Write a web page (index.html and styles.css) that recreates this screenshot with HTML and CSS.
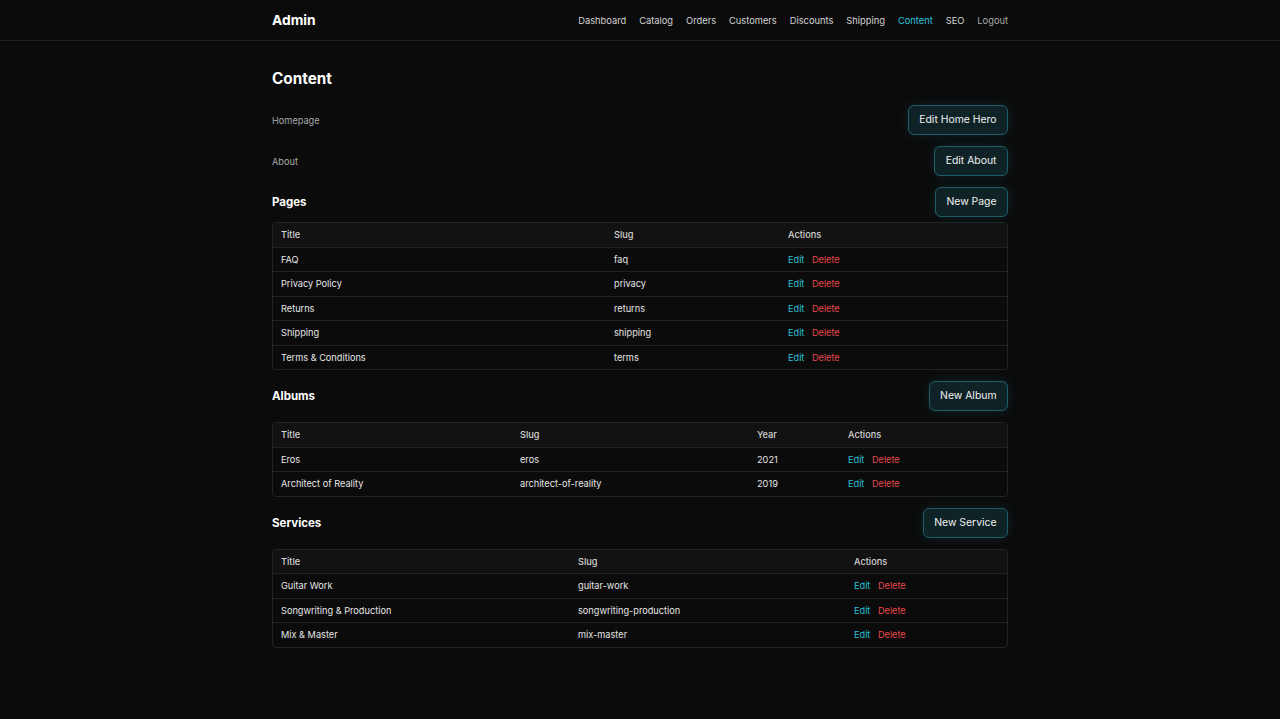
FILE: index.html
```html
<!DOCTYPE html>
<html>
<head>
    <title>Admin - Content</title>
    <link rel="stylesheet" href="styles.css">
</head>
<body>
    <header class="topbar">
        <div class="container topbar-inner">
            <a class="brand" href="#">Admin</a>
            <nav class="nav">
                <a href="#">Dashboard</a>
                <a href="#">Catalog</a>
                <a href="#">Orders</a>
                <a href="#">Customers</a>
                <a href="#">Discounts</a>
                <a href="#">Shipping</a>
                <a href="#" class="active">Content</a>
                <a href="#">SEO</a>
                <a href="#" class="logout">Logout</a>
            </nav>
        </div>
    </header>

    <main class="container">
        <h1>Content</h1>

        <div class="row">
            <span class="label">Homepage</span>
            <button class="btn">Edit Home Hero</button>
        </div>
        <div class="row">
            <span class="label">About</span>
            <button class="btn">Edit About</button>
        </div>

        <div class="row section-head first">
            <h2>Pages</h2>
            <button class="btn">New Page</button>
        </div>
        <div class="table-wrap">
            <table>
                <colgroup><col style="width:333px"><col style="width:174px"><col></colgroup>
                <thead>
                    <tr><th>Title</th><th>Slug</th><th>Actions</th></tr>
                </thead>
                <tbody>
                    <tr><td>FAQ</td><td>faq</td><td><a class="edit" href="#">Edit</a><a class="delete" href="#">Delete</a></td></tr>
                    <tr><td>Privacy Policy</td><td>privacy</td><td><a class="edit" href="#">Edit</a><a class="delete" href="#">Delete</a></td></tr>
                    <tr><td>Returns</td><td>returns</td><td><a class="edit" href="#">Edit</a><a class="delete" href="#">Delete</a></td></tr>
                    <tr><td>Shipping</td><td>shipping</td><td><a class="edit" href="#">Edit</a><a class="delete" href="#">Delete</a></td></tr>
                    <tr><td>Terms &amp; Conditions</td><td>terms</td><td><a class="edit" href="#">Edit</a><a class="delete" href="#">Delete</a></td></tr>
                </tbody>
            </table>
        </div>

        <div class="row section-head">
            <h2>Albums</h2>
            <button class="btn">New Album</button>
        </div>
        <div class="table-wrap">
            <table>
                <colgroup><col style="width:239px"><col style="width:237px"><col style="width:91px"><col></colgroup>
                <thead>
                    <tr><th>Title</th><th>Slug</th><th>Year</th><th>Actions</th></tr>
                </thead>
                <tbody>
                    <tr><td>Eros</td><td>eros</td><td>2021</td><td><a class="edit" href="#">Edit</a><a class="delete" href="#">Delete</a></td></tr>
                    <tr><td>Architect of Reality</td><td>architect-of-reality</td><td>2019</td><td><a class="edit" href="#">Edit</a><a class="delete" href="#">Delete</a></td></tr>
                </tbody>
            </table>
        </div>

        <div class="row section-head">
            <h2>Services</h2>
            <button class="btn">New Service</button>
        </div>
        <div class="table-wrap">
            <table>
                <colgroup><col style="width:297px"><col style="width:276px"><col></colgroup>
                <thead>
                    <tr><th>Title</th><th>Slug</th><th>Actions</th></tr>
                </thead>
                <tbody>
                    <tr><td>Guitar Work</td><td>guitar-work</td><td><a class="edit" href="#">Edit</a><a class="delete" href="#">Delete</a></td></tr>
                    <tr><td>Songwriting &amp; Production</td><td>songwriting-production</td><td><a class="edit" href="#">Edit</a><a class="delete" href="#">Delete</a></td></tr>
                    <tr><td>Mix &amp; Master</td><td>mix-master</td><td><a class="edit" href="#">Edit</a><a class="delete" href="#">Delete</a></td></tr>
                </tbody>
            </table>
        </div>
    </main>
</body>
</html>
```

FILE: styles.css
```css
body {
    font-family: 'Inter', 'Liberation Sans', sans-serif;
    margin: 0;
    background-color: #0b0b0b;
    color: #e8e8e8;
    font-size: 10px;
}
a {
    text-decoration: none;
}
.container {
    width: 736px;
    margin: 0 auto;
}
.topbar {
    height: 40px;
    border-bottom: 1px solid #1f1f1f;
}
.topbar-inner {
    height: 100%;
    display: flex;
    align-items: center;
    justify-content: space-between;
}
.brand {
    color: #fff;
    font-size: 13.8px;
    font-weight: 700;
}
.nav {
    display: flex;
    gap: 13px;
}
.nav a {
    color: #d4d4d4;
    font-size: 9.3px;
}
.nav a.active {
    color: #2ec4dc;
}
.nav a.logout {
    color: #a8a8a8;
}
h1 {
    font-size: 15.3px;
    line-height: 20px;
    font-weight: 700;
    color: #fff;
    margin: 28px 0 16px;
}
h2 {
    font-size: 11.5px;
    font-weight: 700;
    color: #fff;
    margin: 0;
}
.row {
    display: flex;
    align-items: center;
    justify-content: space-between;
    margin-bottom: 11px;
}
.label {
    color: #a8a8a8;
    font-size: 9.2px;
}
.section-head.first {
    margin-bottom: 5px;
}
.btn {
    font-family: inherit;
    font-size: 10.4px;
    line-height: 14px;
    color: #f0f0f0;
    background-color: #0f2327;
    border: 1px solid #1f5e68;
    border-radius: 6px;
    padding: 7px 10.5px;
    box-shadow: 0 0 12px rgba(40, 190, 215, 0.14);
    cursor: pointer;
}
.btn:hover {
    background-color: #13303a;
}
.table-wrap {
    border: 1px solid #242424;
    border-radius: 4px;
    overflow: hidden;
    margin-bottom: 11px;
}
table {
    width: 100%;
    border-collapse: collapse;
    table-layout: fixed;
}
th, td {
    text-align: left;
    padding: 6px 8px;
    line-height: 11.5px;
    font-size: 9.2px;
}
th {
    background-color: #121212;
    color: #d4d4d4;
    font-weight: 500;
}
td {
    border-top: 1px solid #222;
    color: #e6e6e6;
}
.edit {
    color: #2ec0d6;
    margin-right: 7.5px;
}
.delete {
    color: #e5484d;
}
```
